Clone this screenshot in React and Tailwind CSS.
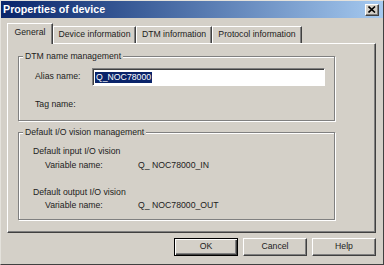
import React from "react";

const font = "font-['Liberation_Sans',Arial,sans-serif]";

const Tab = ({ label, active, width }) => (
  <div
    className={
      active
        ? "relative z-10 -mb-[1px] flex h-[21px] items-center justify-center border-l border-t border-white border-r border-r-[#404040] bg-[#d4d0c8] pb-[2px] shadow-[inset_-1px_0_0_#808080]"
        : "flex h-[17px] items-center justify-center border-l border-t border-white border-r border-r-[#404040] bg-[#d4d0c8] shadow-[inset_-1px_0_0_#808080]"
    }
    style={{ width }}
  >
    {label}
  </div>
);

const Group = ({ title, className, children }) => (
  <div
    className={
      "relative w-[317px] border border-[#808080] shadow-[inset_1px_1px_0_#fff,1px_1px_0_#fff] " +
      className
    }
  >
    <span className="absolute -top-[7px] left-[4px] bg-[#d4d0c8] px-[2px] leading-[12px]">
      {title}
    </span>
    {children}
  </div>
);

const Button = ({ label, isDefault }) => (
  <button
    className={
      isDefault
        ? "h-[18px] w-[64px] border border-black bg-[#d4d0c8] shadow-[inset_1px_1px_0_#fff,inset_-1px_-1px_0_#404040,inset_-2px_-2px_0_#808080]"
        : "h-[18px] w-[64px] border-l border-t border-white border-r border-b border-r-[#404040] border-b-[#404040] bg-[#d4d0c8] shadow-[inset_-1px_-1px_0_#808080]"
    }
  >
    {label}
  </button>
);

export default function App() {
  return (
    <div
      className={
        "flex h-[265px] w-[384px] flex-col border-l border-t border-[#e4e2dc] border-r border-b border-r-[#404040] border-b-[#404040] bg-[#d4d0c8] text-[8.7px] text-[#1c1c1c] " +
        font
      }
    >
      {/* Title bar */}
      <div className="flex h-[17px] items-center justify-between bg-linear-to-r from-[#0a246a] to-[#a6caf0] pl-[2px] pr-[4px]">
        <span className="text-[10.7px] font-bold leading-none text-white">
          Properties of device
        </span>
        <div className="flex h-[12px] w-[14px] items-center justify-center border-l border-t border-white border-r border-b border-r-[#404040] border-b-[#404040] bg-[#d4d0c8] shadow-[inset_-1px_-1px_0_#808080]">
          <svg width="8" height="7" viewBox="0 0 8 7">
            <path d="M0.5 0.5 L7 6.5 M7 0.5 L0.5 6.5" stroke="#000" strokeWidth="1.6" />
          </svg>
        </div>
      </div>

      {/* Tabs */}
      <div className="mt-[4px] flex h-[21px] items-end pl-[6px]">
        <Tab label="General" active width={46} />
        <Tab label="Device information" width={83} />
        <Tab label="DTM information" width={76} />
        <Tab label="Protocol information" width={90} />
      </div>

      {/* Panel */}
      <div className="ml-[6px] flex h-[190px] w-[369px] flex-col border-l border-t border-white border-r border-b border-r-[#404040] border-b-[#404040] pl-[10px] pt-[12px] shadow-[inset_-1px_-1px_0_#808080]">
        <Group title="DTM name management" className="h-[65px]">
          <div className="mt-[11px] flex items-center pl-[16px]">
            <span className="w-[57px]">Alias name:</span>
            <div className="flex h-[18px] w-[233px] items-center border-l border-t border-[#808080] border-r border-b border-r-white border-b-white bg-white pl-[2px] shadow-[inset_1px_1px_0_#404040]">
              <span className="flex h-[11px] items-center bg-[#0a246a] px-[1px] leading-none text-white">
                Q_NOC78000
              </span>
            </div>
          </div>
          <div className="mt-[12px] pl-[16px] leading-[12px]">Tag name:</div>
        </Group>

        <Group title="Default I/O vision management" className="mt-[11px] h-[88px]">
          <div className="mt-[11px] pl-[14px] leading-[14px]">
            <div>Default input I/O vision</div>
            <div className="flex pl-[12px]">
              <span className="w-[93px]">Variable name:</span>
              <span>Q_ NOC78000_IN</span>
            </div>
            <div className="mt-[13px]">Default output I/O vision</div>
            <div className="-mt-[1px] flex pl-[12px]">
              <span className="w-[93px]">Variable name:</span>
              <span>Q_ NOC78000_OUT</span>
            </div>
          </div>
        </Group>
      </div>

      {/* Buttons */}
      <div className="ml-[6px] mt-[5px] flex w-[369px] justify-end gap-[5px]">
        <Button label="OK" isDefault />
        <Button label="Cancel" />
        <Button label="Help" />
      </div>
    </div>
  );
}
